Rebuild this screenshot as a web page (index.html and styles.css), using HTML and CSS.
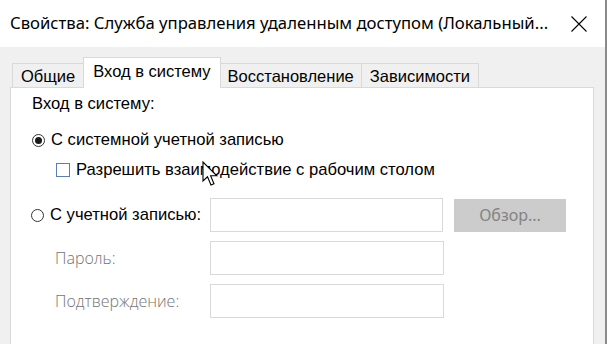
FILE: index.html
```html
<!DOCTYPE html>
<html lang="ru">
<head>
<meta charset="utf-8">
<title>Свойства</title>
<link rel="stylesheet" href="styles.css">
</head>
<body>
<div class="window">
  <div class="titlebar">
    <div class="title">Свойства: Служба управления удаленным доступом (Локальный...</div>
    <div class="close">
      <svg width="16" height="16" viewBox="0 0 16 16"><path d="M0.5 0.5 L15.5 15.5 M15.5 0.5 L0.5 15.5" stroke="#000" stroke-width="1.1" fill="none"/></svg>
    </div>
  </div>
  <div class="content">
    <div class="tabs">
      <div class="tab">Общие</div>
      <div class="tab active">Вход в систему</div>
      <div class="tab">Восстановление</div>
      <div class="tab">Зависимости</div>
    </div>
    <div class="panel">
      <div class="heading">Вход в систему:</div>
      <div class="row radio-row first">
        <span class="radio checked"><span class="dot"></span></span>
        <span>С системной учетной записью</span>
      </div>
      <div class="row check-row">
        <span class="checkbox"></span>
        <span>Разрешить взаимодействие с рабочим столом</span>
      </div>
      <div class="form">
        <div class="frow">
          <div class="flabel radio-row">
            <span class="radio"></span>
            <span>С учетной записью:</span>
          </div>
          <div class="input"></div>
          <div class="button">Обзор...</div>
        </div>
        <div class="frow">
          <div class="flabel disabled">Пароль:</div>
          <div class="input wide"></div>
        </div>
        <div class="frow">
          <div class="flabel disabled">Подтверждение:</div>
          <div class="input wide"></div>
        </div>
      </div>
    </div>
  </div>
  <svg class="cursor" width="20" height="28" viewBox="0 0 20 28">
    <path d="M1 1 L1 20 L5.5 15.8 L9 24 L12 22.7 L8.6 14.8 L14.8 14.8 Z" fill="#fff" stroke="#000" stroke-width="1.1" stroke-linejoin="miter"/>
  </svg>
</div>
</body>
</html>
```
FILE: styles.css
```css
* { box-sizing: border-box; }
html, body { margin: 0; padding: 0; }
body {
  width: 607px;
  height: 344px;
  overflow: hidden;
  background: #f0f0f0;
  font-family: "Liberation Sans", Arial, sans-serif;
  color: #000;
}
.window {
  position: relative;
  width: 607px;
  height: 344px;
  background: #f0f0f0;
  border-right: 2px solid #8a8a8a;
  overflow: hidden;
}
.titlebar {
  height: 47px;
  background: #fff;
  display: flex;
  align-items: center;
  padding-left: 10px;
}
.title {
  font-family: "Noto Sans", "Open Sans", sans-serif;
  font-size: 16.7px;
  color: #000;
  white-space: nowrap;
  flex: 1;
  padding-bottom: 2px;
}
.close {
  width: 16px;
  height: 16px;
  margin-right: 18px;
  display: flex;
}
.content {
  padding: 10px 11px 0 10px;
}
.tabs {
  display: flex;
  align-items: flex-end;
  height: 30px;
  padding-left: 2px;
}
.tab {
  height: 24px;
  padding: 1px 7px 0 7px;
  border: 1px solid #d9d9d9;
  border-bottom: none;
  margin-left: -1px;
  font-size: 16.5px;
  display: flex;
  align-items: center;
  background: #f0f0f0;
}
.tab:first-child { margin-left: 0; padding: 1px 8px 0 8px; }
.tab:last-child { padding: 1px 8px 0 8px; }
.tab.active {
  height: 31px;
  margin-bottom: -1px;
  background: #fff;
  padding: 0 9px 4px 9px;
  position: relative;
  z-index: 1;
}
.panel {
  background: #fff;
  border: 1px solid #d9d9d9;
  height: 280px;
  padding: 7px 0 0 21px;
  font-size: 16.6px;
}
.heading {
  height: 18px;
  line-height: 18px;
}
.row {
  display: flex;
  align-items: center;
  height: 18px;
}
.radio-row span + span { margin-left: 6px; }
.first { margin-top: 18px; }
.check-row {
  margin-top: 12px;
  padding-left: 24px;
}
.radio {
  width: 13px;
  height: 13px;
  border: 1px solid #333;
  border-radius: 50%;
  display: inline-flex;
  align-items: center;
  justify-content: center;
  background: #fff;
  flex: none;
}
.radio .dot {
  width: 7px;
  height: 7px;
  border-radius: 50%;
  background: #1a1a1a;
}
.checkbox {
  width: 14px;
  height: 14px;
  border: 1px solid #5a7fb0;
  background: #fff;
  margin-right: 6px;
  flex: none;
}
.form {
  margin-top: 19px;
  display: flex;
  flex-direction: column;
  gap: 9px;
}
.frow {
  display: flex;
  align-items: center;
}
.flabel {
  width: 179px;
  display: flex;
  align-items: center;
  margin-left: -1px;
}
.flabel.disabled {
  color: #747474;
  padding-left: 24px;
  font-family: "Open Sans", "Noto Sans", sans-serif;
  font-weight: 300;
  font-size: 16px;
}
.input {
  width: 233px;
  height: 34px;
  border: 1px solid #d9d9d9;
  background: #fff;
}
.input.wide { width: 234px; }
.button {
  margin-left: 11px;
  width: 112px;
  height: 33px;
  background: #cccccc;
  color: #838383;
  font-family: "Noto Sans", "Open Sans", sans-serif;
  font-size: 16px;
  display: flex;
  align-items: center;
  justify-content: center;
}
.cursor {
  position: absolute;
  left: 202px;
  top: 161px;
}
```
